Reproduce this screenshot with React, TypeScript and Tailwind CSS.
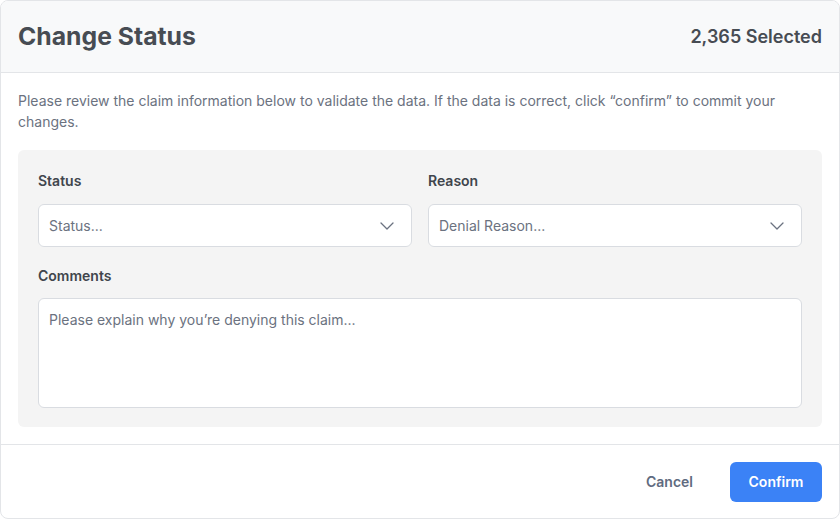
import { ChevronDown } from "lucide-react";

function SelectField({ label, placeholder }: { label: string; placeholder: string }) {
  return (
    <div className="flex flex-col">
      <label className="text-sm font-semibold leading-5 text-[#40454c] mb-[13px]">{label}</label>
      <button
        type="button"
        className="flex h-[43px] items-center justify-between rounded-md border border-[#d9dce1] bg-white pl-[10px] pr-[12px] text-left"
      >
        <span className="text-sm text-[#6b7280]">{placeholder}</span>
        <ChevronDown className="h-6 w-6 text-[#6b7280]" strokeWidth={1.3} />
      </button>
    </div>
  );
}

export default function App() {
  return (
    <div className="h-[519px] w-[840px] bg-white font-['Inter',sans-serif]">
      <div className="flex h-full flex-col overflow-hidden rounded-lg border border-[#e3e5e8] bg-white">
        {/* Header */}
        <header className="flex h-[72px] shrink-0 items-center justify-between border-b border-[#e3e5e8] bg-[#f8f9fa] px-[17px]">
          <h2 className="text-[24.75px] font-bold text-[#474c53]">Change Status</h2>
          <span className="text-lg font-semibold text-[#474c53]">2,365 Selected</span>
        </header>

        {/* Body */}
        <div className="flex-1 px-[17px] pt-[17px] pb-[17px]">
          <p className="text-sm leading-[21px] text-[#6b7280]">
            Please review the claim information below to validate the data. If the data is correct, click “confirm” to commit your changes.
          </p>

          <div className="mt-[18px] rounded-md bg-[#f4f4f4] px-5 pt-[21px] pb-[19px]">
            <div className="grid grid-cols-2 gap-4">
              <SelectField label="Status" placeholder="Status..." />
              <SelectField label="Reason" placeholder="Denial Reason..." />
            </div>

            <div className="mt-[19px] flex flex-col">
              <label className="text-sm font-semibold leading-5 text-[#40454c] mb-3">Comments</label>
              <textarea
                className="h-[110px] resize-none rounded-md border border-[#d9dce1] bg-white px-[10px] py-[11px] text-sm leading-5 text-gray-700 outline-none placeholder:text-[#6b7280]"
                placeholder="Please explain why you’re denying this claim..."
              />
            </div>
          </div>
        </div>

        {/* Footer */}
        <footer className="flex h-[74px] shrink-0 items-center justify-end gap-[19px] border-t border-[#e3e5e8] px-[17px]">
          <button type="button" className="h-10 px-[18px] text-sm font-semibold text-[#5f6b80]">
            Cancel
          </button>
          <button type="button" className="h-10 w-[92px] rounded-md bg-[#3b82f6] text-sm font-semibold text-white">
            Confirm
          </button>
        </footer>
      </div>
    </div>
  );
}
